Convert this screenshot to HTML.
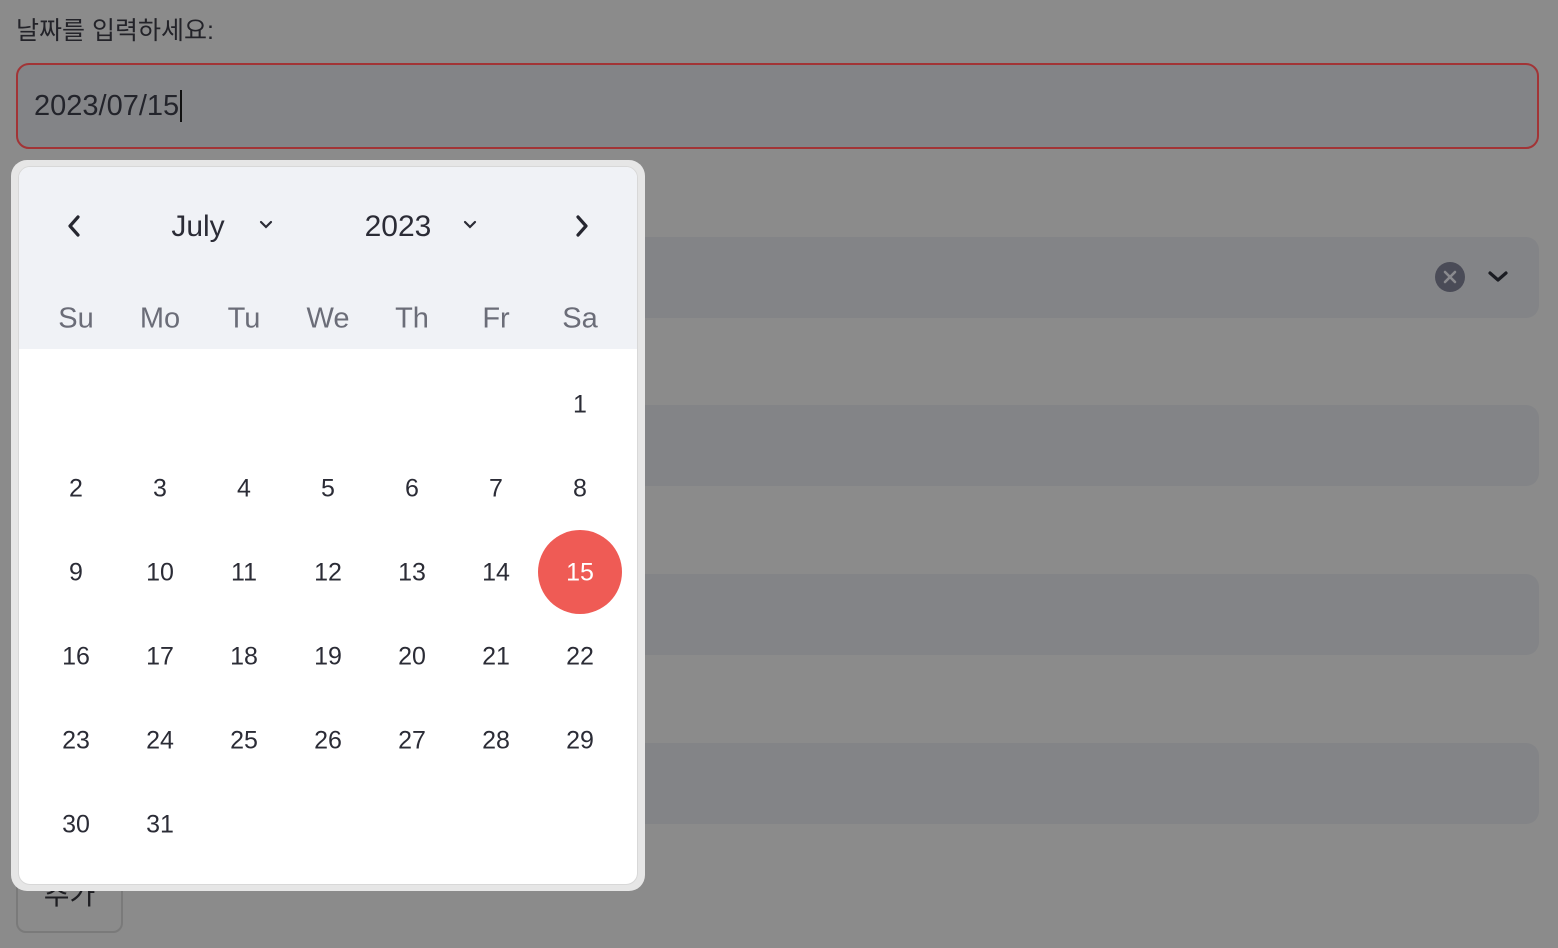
<!DOCTYPE html>
<html><head><meta charset="utf-8"><style>
*{margin:0;padding:0;box-sizing:border-box}
body{width:1558px;height:948px;background:#8b8b8b;font-family:"Source Sans Pro","Liberation Sans","Noto Sans CJK KR",sans-serif;color:#1f2029;position:relative;overflow:hidden}
.abs{position:absolute}
.lbl{left:16px;top:11px;font-size:25px;color:#232329}
.inp{left:16px;top:63px;width:1523px;height:86px;border:2px solid #a23436;border-radius:13px;background:#838487;font-size:29px;padding:25px 16px;color:#23242b}
.inp span{border-right:2px solid #111;padding-right:1px}
.box{left:16px;width:1523px;height:81px;border-radius:13px;background:#838487}
.btn{left:16px;top:858px;width:107px;height:75px;border:2px solid #7a7a7a;border-radius:10px;font-size:28px;text-align:center;line-height:70px;color:#1e1e22}
.pop{left:11px;top:160px;width:634px;height:731px;background:#e6e6e6;border-radius:16px}
.in{left:18px;top:166px;width:620px;height:719px;background:#fff;border-radius:12px;overflow:hidden;border:1px solid #d8d8d8}
.hd{position:absolute;left:0;top:0;width:100%;height:182px;background:#f0f2f6}
.t{position:absolute;transform:translate(-50%,-50%);white-space:nowrap}
.dw{font-size:29px;color:#6b6d78}
.d{font-size:25px;color:#2b2c36}
.sel{position:absolute;width:84px;height:84px;border-radius:50%;background:#ef5b55}
</style></head><body>
<div class="abs lbl">날짜를 입력하세요:</div>
<div class="abs inp"><span>2023/07/15</span></div>
<div class="abs box" style="top:237px"></div>
<div class="abs box" style="top:405px"></div>
<div class="abs box" style="top:574px"></div>
<div class="abs box" style="top:743px"></div>
<div class="abs" style="left:1435px;top:262px;width:30px;height:30px;border-radius:50%;background:#4a4b57"></div>
<svg class="abs" style="left:1435px;top:262px" width="30" height="30"><path d="M10 10L20 20M20 10L10 20" stroke="#8a8a8e" stroke-width="2.6" stroke-linecap="round"/></svg>
<svg class="abs" style="left:1486px;top:267px" width="24" height="20"><path d="M4 6L12 13L20 6" fill="none" stroke="#1b1c22" stroke-width="3.2" stroke-linecap="round" stroke-linejoin="round"/></svg>
<div class="abs btn">추가</div>
<div class="abs pop"></div>
<div class="abs in">
<div class="hd"></div>
</div>
<div class="abs" style="left:0;top:0;width:1558px;height:948px">
<svg class="abs" style="left:62px;top:212px" width="24" height="28"><path d="M16 5L8 14L16 23" fill="none" stroke="#262730" stroke-width="3.2" stroke-linecap="round" stroke-linejoin="round"/></svg>
<svg class="abs" style="left:570px;top:212px" width="24" height="28"><path d="M8 5L16 14L8 23" fill="none" stroke="#262730" stroke-width="3.2" stroke-linecap="round" stroke-linejoin="round"/></svg>
<div class="t" style="left:198px;top:227px;font-size:30px;color:#2b2c36">July</div>
<div class="t" style="left:398px;top:227px;font-size:30px;color:#2b2c36">2023</div>
<svg class="abs" style="left:258px;top:218px" width="16" height="14"><path d="M3 4L8 9L13 4" fill="none" stroke="#2b2c36" stroke-width="2.2" stroke-linecap="round"/></svg>
<svg class="abs" style="left:462px;top:218px" width="16" height="14"><path d="M3 4L8 9L13 4" fill="none" stroke="#2b2c36" stroke-width="2.2" stroke-linecap="round"/></svg>
<div class="t dw" style="left:76px;top:319px">Su</div>
<div class="t dw" style="left:160px;top:319px">Mo</div>
<div class="t dw" style="left:244px;top:319px">Tu</div>
<div class="t dw" style="left:328px;top:319px">We</div>
<div class="t dw" style="left:412px;top:319px">Th</div>
<div class="t dw" style="left:496px;top:319px">Fr</div>
<div class="t dw" style="left:580px;top:319px">Sa</div>
<div class="sel" style="left:538px;top:530px"></div>
<div id="g"></div>
</div>
<script>
var g=document.getElementById('g'),h='';
for(var d=1;d<=31;d++){var p=d+5,c=p%7,r=Math.floor(p/7);
h+='<div class="t d" style="left:'+(76+84*c)+'px;top:'+(405+84*r)+'px;'+(d==15?'color:#fff':'')+'">'+d+'</div>';}
g.innerHTML=h;
</script>
</body></html>
